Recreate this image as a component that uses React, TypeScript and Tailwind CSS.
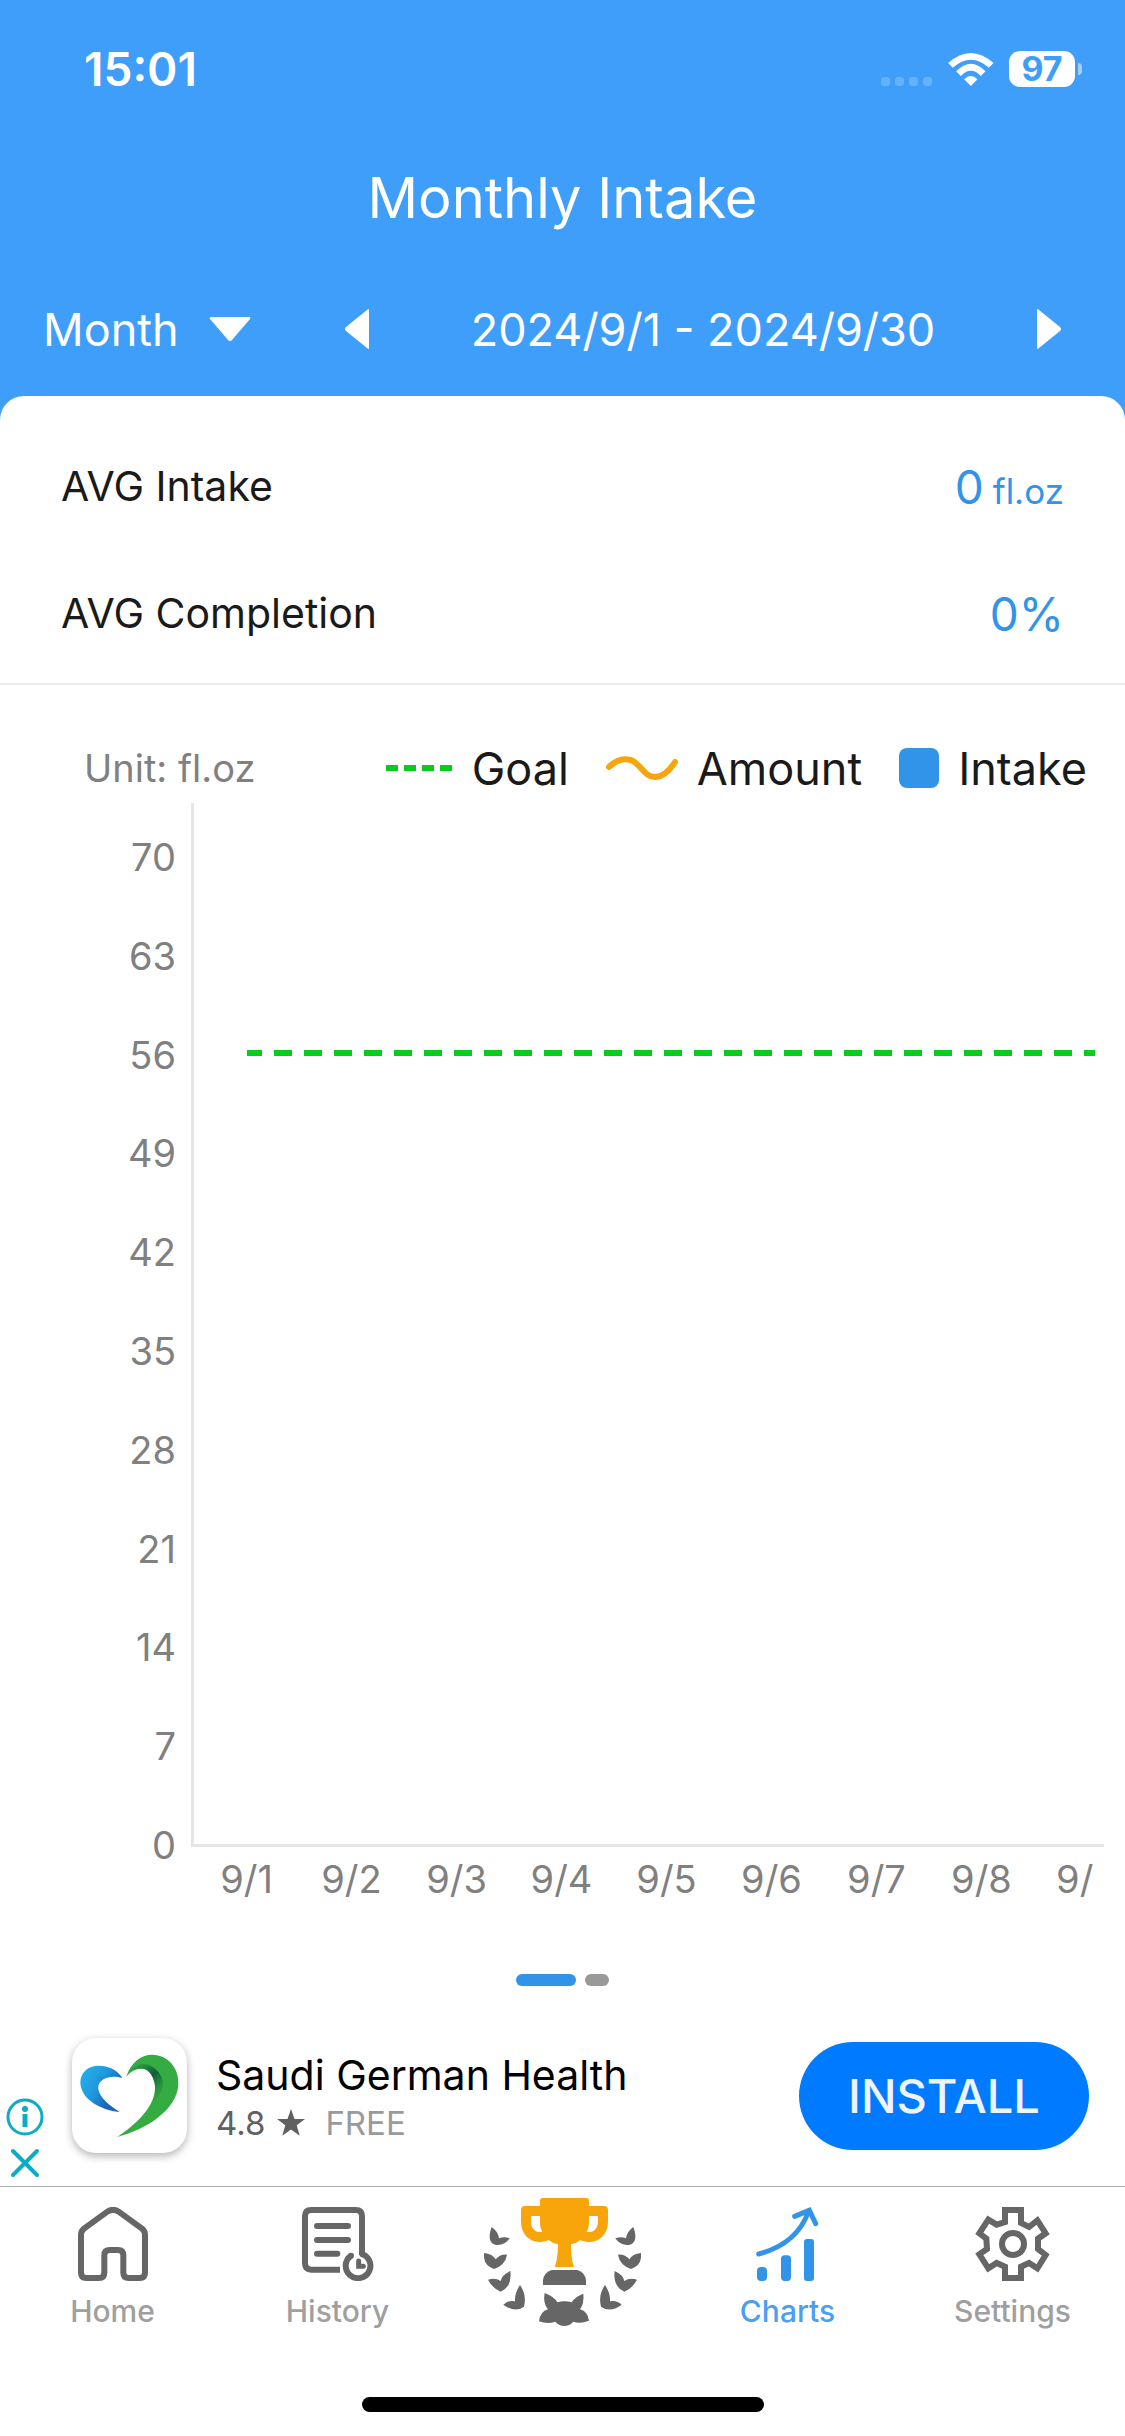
import type { ReactNode } from 'react';

const yTicks = [70, 63, 56, 49, 42, 35, 28, 21, 14, 7, 0];
const xTicks = ['9/1', '9/2', '9/3', '9/4', '9/5', '9/6', '9/7', '9/8', '9/9'];

function StatusBar() {
  return (
    <div className="flex h-[138px] items-center justify-between pr-[43px] pl-[84px]">
      <span className="text-[46px] leading-none font-semibold">15:01</span>
      <div className="flex items-center">
        <div className="mt-6 mr-4 flex gap-[5px]">
          <i className="size-[9px] rounded-[3px] bg-white/20" />
          <i className="size-[9px] rounded-[3px] bg-white/20" />
          <i className="size-[9px] rounded-[3px] bg-white/20" />
          <i className="size-[9px] rounded-[3px] bg-white/20" />
        </div>
        <svg viewBox="325 66 137 99" className="mr-[15px] h-[33px] w-[46px]" fill="currentColor">
          <path d="M325 96Q393 36 461 96L447 110Q393 62 339 110Z" />
          <path d="M349 121Q393 75 437 121L423 135Q393 104 363 135Z" />
          <path d="M373 145Q393 125 413 145L393 165Z" />
        </svg>
        <span className="flex h-9 w-[66px] items-center justify-center rounded-[11px] bg-white text-[34px] leading-none font-bold text-[#3f9efa]">
          97
        </span>
        <i className="ml-[3px] h-3 w-1 rounded-r-full bg-white/50" />
      </div>
    </div>
  );
}

function Header() {
  return (
    <header className="text-white">
      <StatusBar />
      <h1 className="flex h-[120px] items-center justify-center text-[56px] leading-none">
        Monthly Intake
      </h1>
      <div className="flex h-[138px] items-center pt-1 pr-[64px] pl-[43px] text-[45px] leading-none">
        <div className="relative">
          <select
            aria-label="Period"
            defaultValue="Month"
            className="appearance-none bg-transparent pr-[72px] outline-none"
          >
            <option>Week</option>
            <option>Month</option>
            <option>Year</option>
          </select>
          <svg
            viewBox="0 0 42 24"
            className="pointer-events-none absolute top-1/2 right-0 h-6 w-[42px] -translate-y-1/2"
            fill="currentColor"
          >
            <path d="M2 0H40Q42 0 41 2L23 23Q21 25 19 23L1 2Q0 0 2 0Z" />
          </svg>
        </div>
        <div className="ml-[94px] flex flex-1 items-center justify-between">
          <button type="button" aria-label="Previous month">
            <svg viewBox="0 0 24 40" className="h-10 w-6" fill="currentColor">
              <path d="M24 1V39Q24 41 22 39L1 22Q-1 20 1 18L22 1Q24 -1 24 1Z" />
            </svg>
          </button>
          <span>2024/9/1 - 2024/9/30</span>
          <button type="button" aria-label="Next month">
            <svg viewBox="0 0 24 40" className="h-10 w-6" fill="currentColor">
              <path d="M0 1V39Q0 41 2 39L23 22Q25 20 23 18L2 1Q0 -1 0 1Z" />
            </svg>
          </button>
        </div>
      </div>
    </header>
  );
}

function StatRow({ label, children }: { label: string; children: ReactNode }) {
  return (
    <div className="flex h-[127px] items-center justify-between">
      <dt className="text-[41px] leading-none text-[#1a1a1a]">{label}</dt>
      <dd className="text-[46px] leading-none text-[#3294e8]">{children}</dd>
    </div>
  );
}

function Legend() {
  return (
    <div className="flex h-[70px] items-center justify-between pr-[38px] pl-[84px] text-[#1a1a1a]">
      <span className="text-[38px] leading-none text-[#808080]">Unit: fl.oz</span>
      <div className="flex items-center gap-[37px] text-[45px] leading-none">
        <span className="flex items-center gap-[19px]">
          <svg viewBox="0 0 67 6" className="h-[6px] w-[67px]">
            <path d="M0 3H67" stroke="#06cc1c" strokeWidth="6" strokeDasharray="12 6" />
          </svg>
          Goal
        </span>
        <span className="flex items-center gap-[19px]">
          <svg viewBox="0 0 72 26" className="h-[26px] w-[72px]" fill="none">
            <path
              d="M3 12C10 5 18 3 25 5C35 9 38 22 49 22C58 22 64 15 69 7"
              stroke="#f7a50b"
              strokeWidth="6"
              strokeLinecap="round"
            />
          </svg>
          Amount
        </span>
        <span className="flex items-center gap-[19px]">
          <i className="size-10 rounded-lg bg-[#3294e8]" />
          Intake
        </span>
      </div>
    </div>
  );
}

function Chart() {
  return (
    <section className="pt-12">
      <Legend />
      <div className="flex items-start text-[38px] text-[#808080]">
        <div className="flex h-[1066px] w-[191px] flex-col justify-between pt-[30px] pr-[15px] text-right leading-[48px]">
          {yTicks.map((tick) => (
            <span key={tick}>{tick}</span>
          ))}
        </div>
        <div className="min-w-0 flex-1">
          <div className="mr-[21px] h-[1044px] border-b-3 border-l-3 border-[#e6e6e6] pr-[9px]">
            <svg className="h-full w-full">
              <line
                x1="53"
                y1="250"
                x2="100%"
                y2="250"
                stroke="#06cc1c"
                strokeWidth="6"
                strokeDasharray="18 12"
                strokeDashoffset="3"
              />
            </svg>
          </div>
          <div className="mr-[31px] ml-[3px] flex overflow-hidden pt-2 leading-[48px]">
            {xTicks.map((tick) => (
              <span key={tick} className="w-[105px] shrink-0 text-center">
                {tick}
              </span>
            ))}
          </div>
        </div>
      </div>
      <div className="flex justify-center gap-[9px] pt-[71px]">
        <button type="button" aria-label="Page 1" className="h-3 w-[60px] rounded-full bg-[#3294e8]" />
        <button type="button" aria-label="Page 2" className="h-3 w-6 rounded-full bg-[#999]" />
      </div>
    </section>
  );
}

function AppLogo() {
  return (
    <svg
      viewBox="30 36 343 345"
      className="size-[115px] shrink-0 rounded-3xl bg-white shadow-[0_3px_8px_rgba(0,0,0,0.3)]"
    >
      <defs>
        <linearGradient id="wave" x1="0.1" y1="0.3" x2="0.7" y2="0.7">
          <stop offset="0" stopColor="#22a8e4" />
          <stop offset="0.5" stopColor="#1f97de" />
          <stop offset="1" stopColor="#1c66b8" />
        </linearGradient>
        <linearGradient id="waveShade" x1="0" y1="0" x2="1" y2="0">
          <stop offset="0" stopColor="#1d84d0" stopOpacity="0" />
          <stop offset="1" stopColor="#1b4f9f" />
        </linearGradient>
        <linearGradient id="leafShade" x1="0.1" y1="0.1" x2="0.8" y2="0.9">
          <stop offset="0" stopColor="#1d8040" stopOpacity="0.4" />
          <stop offset="0.5" stopColor="#0d5e38" />
          <stop offset="1" stopColor="#1d8040" stopOpacity="0.2" />
        </linearGradient>
      </defs>
      <path
        d="M180 156C165 130 135 118 105 119C75 120 54 142 54 170C56 215 105 250 172 258C130 232 104 205 108 180C112 158 145 145 180 156Z"
        fill="url(#wave)"
      />
      <path d="M108 150C85 170 88 215 172 258C130 232 104 205 108 180C109 170 118 160 128 155Z" fill="url(#waveShade)" />
      <path
        d="M192 152C205 110 235 86 270 86C318 88 350 125 348 175C345 250 255 310 165 333C235 285 280 235 278 180C276 155 262 130 240 128C222 127 205 135 192 152Z"
        fill="#35ac42"
      />
      <path
        d="M200 136C225 108 262 108 285 135C308 160 312 195 270 232C279 215 279 195 278 180C276 155 262 130 240 128C222 127 212 130 200 136Z"
        fill="url(#leafShade)"
      />
    </svg>
  );
}

function AdBanner() {
  return (
    <aside className="mt-[19px] flex h-[181px] items-center pr-9 pl-[6px]">
      <div className="flex w-[66px] flex-col gap-3 self-end pb-[8px] text-[#0bacc4]">
        <button type="button" aria-label="Ad information">
          <svg viewBox="0 0 38 38" className="size-[38px]" fill="none" stroke="currentColor">
            <circle cx="19" cy="19" r="17" strokeWidth="3" />
            <circle cx="19" cy="11" r="3" fill="currentColor" stroke="none" />
            <path d="M19 16V29" strokeWidth="5" />
          </svg>
        </button>
        <button type="button" aria-label="Close ad">
          <svg viewBox="0 0 38 30" className="h-[30px] w-[38px]" fill="none" stroke="currentColor">
            <path d="M7 3L31 27M31 3L7 27" strokeWidth="4" strokeLinecap="round" />
          </svg>
        </button>
      </div>
      <AppLogo />
      <div className="ml-[29px] flex-1 pt-1">
        <p className="text-[41px] leading-[48px] text-black">Saudi German Health</p>
        <p className="mt-[2px] flex items-center text-[33px] leading-[44px] text-[#606060]">
          4.8
          <svg viewBox="0 0 24 24" className="mr-5 ml-3 size-[28px]" fill="currentColor">
            <path d="M12 0L15 8.6H24L16.9 14L19.5 23L12 17.6L4.5 23L7.1 14L0 8.6H9Z" />
          </svg>
          <span className="text-[#9a9a9c]">FREE</span>
        </p>
      </div>
      <button
        type="button"
        className="h-[108px] w-[290px] rounded-full bg-[#007aff] text-[47px] leading-none font-medium text-[#eef4fd]"
      >
        INSTALL
      </button>
    </aside>
  );
}

function HomeIcon() {
  return (
    <svg viewBox="111 81 210 222" className="h-[74px] w-[70px]" fill="none" stroke="#666" strokeWidth="18">
      <path d="M120 164Q120 153 129 146L199 95Q216 84 233 95L303 146Q312 153 312 164V278Q312 294 296 294H263Q247 294 247 278V226Q247 210 231 210H207Q190 210 190 226V278Q190 294 174 294H136Q120 294 120 278Z" />
    </svg>
  );
}

function HistoryIcon() {
  return (
    <svg viewBox="780 81 216 222" className="h-[74px] w-[72px]" fill="none" stroke="#666" strokeWidth="18">
      <path d="M894 269H808Q789 269 789 250V109Q789 90 808 90H941Q960 90 960 109V226" />
      <path d="M825 138H918M825 180H918M825 221H886" strokeLinecap="round" />
      <path d="M927 227A37 37 0 1 0 955 221" />
      <circle cx="927" cy="227" r="9" fill="#666" stroke="none" />
      <path d="M950 243V259H964" strokeWidth="15" strokeLinecap="round" />
    </svg>
  );
}

function TrophyIcon() {
  return (
    <svg viewBox="72 54 471 384" className="h-32 w-[157px]" fill="#666">
      <g fill="#f7a50b">
        <path d="M248 54H379Q387 54 387 62V78H432Q444 78 444 90V125C444 165 415 188 383 186Q370 185 360 180Q350 190 333 193C333 225 336 245 342 261H284C290 245 294 225 294 193Q277 190 266 180Q256 185 244 186C212 188 183 165 183 125V90Q183 78 195 78H240V62Q240 54 248 54ZM213 108V125C213 145 225 158 247 156Q240 145 240 130V108ZM387 108V130Q387 145 380 156C402 158 414 145 414 125V108Z" />
      </g>
      <path d="M249 315V300Q252 278 275 270H352Q375 278 378 300V315Z" />
      <path d="M254 339Q283 350 292 367Q313 361 335 367Q345 350 370 341Q373 370 360 388Q384 395 387 422Q360 433 340 425Q328 438 313 438Q298 438 286 425Q262 433 237 424Q240 395 264 388Q248 370 254 339Z" />
      <g id="laurel">
        <path d="M95 141Q115 155 117 175Q132 168 149 175Q135 197 108 195Q78 188 95 141Z" />
        <path d="M72 219Q98 222 107 238Q120 222 141 224Q136 255 102 267Q68 255 72 219Z" />
        <path d="M84 299Q106 292 122 303Q125 285 151 273Q157 320 122 335Q98 326 84 299Z" />
        <path d="M130 374Q146 359 165 364Q163 340 180 315Q201 345 192 380Q165 400 130 374Z" />
      </g>
      <use href="#laurel" transform="translate(615 0) scale(-1 1)" />
    </svg>
  );
}

function ChartsIcon() {
  return (
    <svg viewBox="168 81 189 222" className="h-[74px] w-[63px]" fill="#3294e8">
      <rect x="171" y="261" width="30" height="42" rx="12" />
      <rect x="243" y="226" width="30" height="77" rx="11" />
      <rect x="312" y="177" width="30" height="126" rx="9" />
      <g fill="none" stroke="#3294e8" strokeWidth="15" strokeLinecap="round">
        <path d="M176 222Q290 192 325 96" />
        <path d="M284 109L328 91L347 131" />
      </g>
    </svg>
  );
}

function SettingsIcon() {
  return (
    <svg viewBox="822 81 225 222" className="h-[74px] w-[75px]" fill="none" stroke="#666" strokeWidth="18">
      <path d="M912 90H960V129L984 141L1009 121L1034 160L1011 176V207L1034 225L1009 265L984 249L960 260V294H912V260L887 249L862 265L835 223L858 207L856 176L835 160L862 119L887 134L912 126Z" />
      <circle cx="936" cy="192" r="33" />
    </svg>
  );
}

const tabs = [
  { label: 'Home', icon: <HomeIcon />, color: 'text-[#9f9f9f]' },
  { label: 'History', icon: <HistoryIcon />, color: 'text-[#9f9f9f]' },
  { label: '', icon: <TrophyIcon />, color: '' },
  { label: 'Charts', icon: <ChartsIcon />, color: 'text-[#4a9ff0]' },
  { label: 'Settings', icon: <SettingsIcon />, color: 'text-[#9f9f9f]' },
];

function TabBar() {
  return (
    <nav className="grid h-[144px] grid-cols-5 border-t border-[#adadad]">
      {tabs.map(({ label, icon, color }) =>
        label ? (
          <a key={label} href={`#${label.toLowerCase()}`} className="flex flex-col items-center gap-3 pt-5">
            {icon}
            <span className={`text-[30px] leading-9 font-medium ${color}`}>{label}</span>
          </a>
        ) : (
          <a key="awards" href="#awards" aria-label="Awards" className="flex justify-center pt-[11px]">
            {icon}
          </a>
        ),
      )}
    </nav>
  );
}

export default function App() {
  return (
    <div className="flex min-h-screen flex-col bg-[#3f9efa] font-[Inter,Roboto,sans-serif]">
      <Header />
      <main className="flex flex-1 flex-col rounded-t-3xl bg-white">
        <dl className="border-b-2 border-[#ebebeb] px-[61px] pt-[27px] pb-[6px]">
          <StatRow label="AVG Intake">
            0 <span className="-ml-1 text-[35px]">fl.oz</span>
          </StatRow>
          <StatRow label="AVG Completion">0%</StatRow>
        </dl>
        <Chart />
        <AdBanner />
        <TabBar />
        <div className="mx-auto mt-auto mb-6 h-[15px] w-[402px] rounded-full bg-black" />
      </main>
    </div>
  );
}
